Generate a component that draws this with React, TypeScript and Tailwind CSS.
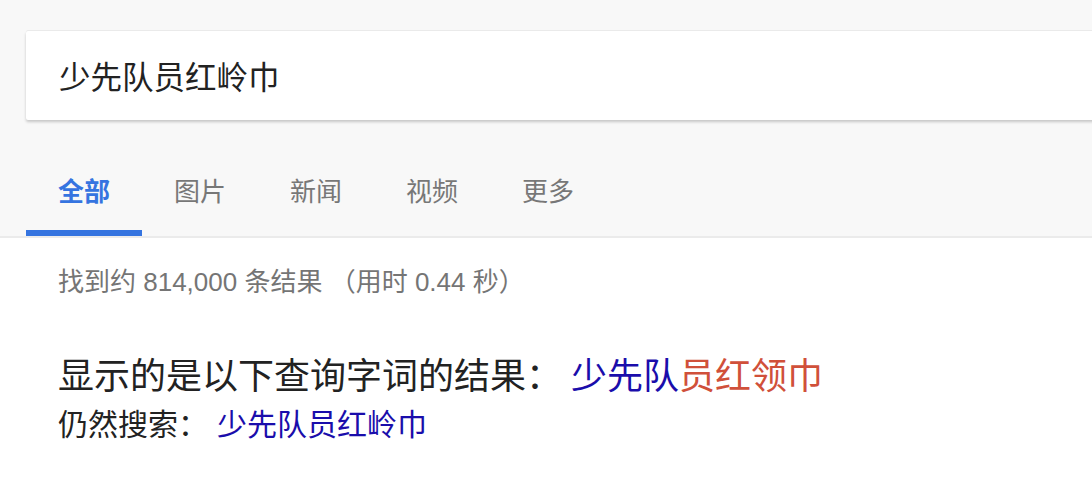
const cjk = "font-['Noto_Sans_CJK_SC',sans-serif]"

const tabs = ["全部", "图片", "新闻", "视频", "更多"]

export default function App() {
  return (
    <div className="w-[1092px] h-[480px] overflow-hidden bg-white">
      {/* Top area: search box + tabs */}
      <header className="bg-[#f8f8f8] border-b-2 border-[#ebebeb]">
        <div className="pt-[31px] pl-[26px] -mr-4">
          <div className="h-[89px] bg-white rounded-[2px] shadow-[0_2px_3px_rgba(0,0,0,0.2),0_-1px_0_rgba(0,0,0,0.05)] flex items-center pl-[33px]">
            <span className={`${cjk} text-[31.5px] leading-none text-[#222]`}>少先队员红岭巾</span>
          </div>
        </div>

        <nav className={`${cjk} flex pl-[26px]`}>
          {tabs.map((t, i) => (
            <a
              key={t}
              className={
                i === 0
                  ? "px-[32px] pt-[57px] pb-[27px] text-[26px] leading-none text-[#3574e0] font-bold border-b-[6px] border-[#3574e0]"
                  : "px-[32px] pt-[57px] pb-[33px] text-[26px] leading-none text-[#777]"
              }
            >
              {t}
            </a>
          ))}
        </nav>
      </header>

      <main className="pl-[58px]">
        <p className="mt-[31px] font-['Liberation_Sans','Noto_Sans_CJK_SC',sans-serif] text-[26px] leading-none text-[#757575]">
          找到约 814,000 条结果 （用时 0.44 秒）
        </p>

        <div className={`${cjk} mt-[60px] text-[#222]`}>
          <p className="text-[36px] leading-none">
            显示的是以下查询字词的结果：
            <a className="ml-[9px] text-[#1a0dab]">
              少先队<span className="text-[#d0503a]">员红领巾</span>
            </a>
          </p>
          <p className="mt-[16px] text-[30px] leading-none">
            仍然搜索：
            <a className="ml-[9px] text-[#1a0dab]">少先队员红岭巾</a>
          </p>
        </div>
      </main>
    </div>
  )
}
